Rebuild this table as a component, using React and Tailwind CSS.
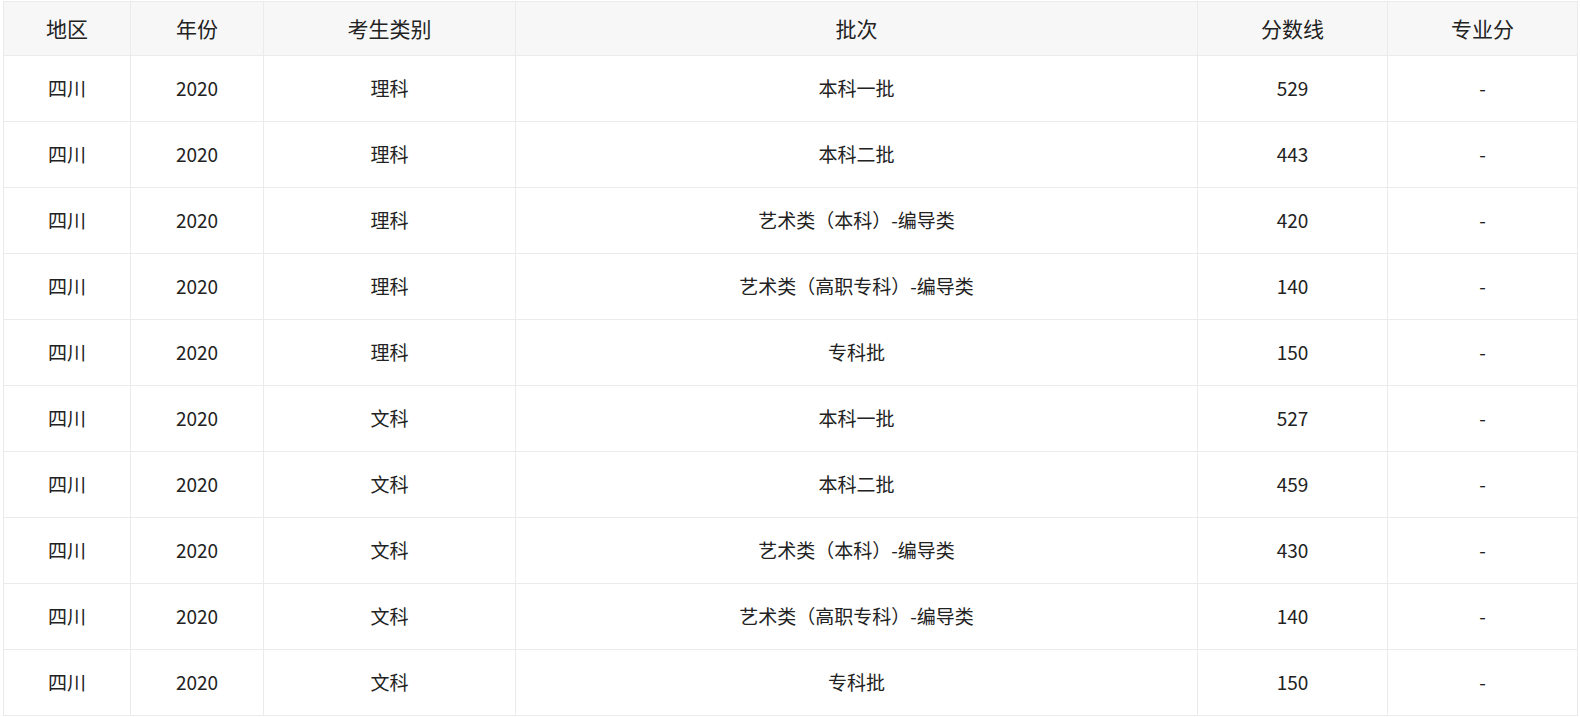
const rows = [
  { region: "四川", year: "2020", type: "理科", batch: "本科一批", score: "529", major: "-" },
  { region: "四川", year: "2020", type: "理科", batch: "本科二批", score: "443", major: "-" },
  { region: "四川", year: "2020", type: "理科", batch: "艺术类（本科）-编导类", score: "420", major: "-" },
  { region: "四川", year: "2020", type: "理科", batch: "艺术类（高职专科）-编导类", score: "140", major: "-" },
  { region: "四川", year: "2020", type: "理科", batch: "专科批", score: "150", major: "-" },
  { region: "四川", year: "2020", type: "文科", batch: "本科一批", score: "527", major: "-" },
  { region: "四川", year: "2020", type: "文科", batch: "本科二批", score: "459", major: "-" },
  { region: "四川", year: "2020", type: "文科", batch: "艺术类（本科）-编导类", score: "430", major: "-" },
  { region: "四川", year: "2020", type: "文科", batch: "艺术类（高职专科）-编导类", score: "140", major: "-" },
  { region: "四川", year: "2020", type: "文科", batch: "专科批", score: "150", major: "-" },
];

const headers = ["地区", "年份", "考生类别", "批次", "分数线", "专业分"];

const App = () => {
  return (
    <div className="pl-[3px] pt-[1px] bg-white min-h-screen">
      <table
        className="table-fixed border-collapse w-[1575px] text-[19px] text-[#222] text-center"
        style={{ fontFamily: '"Noto Sans CJK SC", "Noto Sans", sans-serif' }}
      >
        <colgroup>
          <col className="w-[127px]" />
          <col className="w-[133px]" />
          <col className="w-[252px]" />
          <col className="w-[682px]" />
          <col className="w-[190px]" />
          <col className="w-[190px]" />
        </colgroup>
        <thead>
          <tr className="bg-[#f7f7f7] h-[54px]">
            {headers.map((h) => (
              <th key={h} className="border border-[#ebebeb] font-normal text-[21px] p-0">
                {h}
              </th>
            ))}
          </tr>
        </thead>
        <tbody>
          {rows.map((r, i) => (
            <tr key={i} className="h-[66px]">
              <td className="border border-[#ebebeb] p-0">{r.region}</td>
              <td className="border border-[#ebebeb] p-0">{r.year}</td>
              <td className="border border-[#ebebeb] p-0">{r.type}</td>
              <td className="border border-[#ebebeb] p-0">{r.batch}</td>
              <td className="border border-[#ebebeb] p-0">{r.score}</td>
              <td className="border border-[#ebebeb] p-0">{r.major}</td>
            </tr>
          ))}
        </tbody>
      </table>
    </div>
  );
};

export default App;
